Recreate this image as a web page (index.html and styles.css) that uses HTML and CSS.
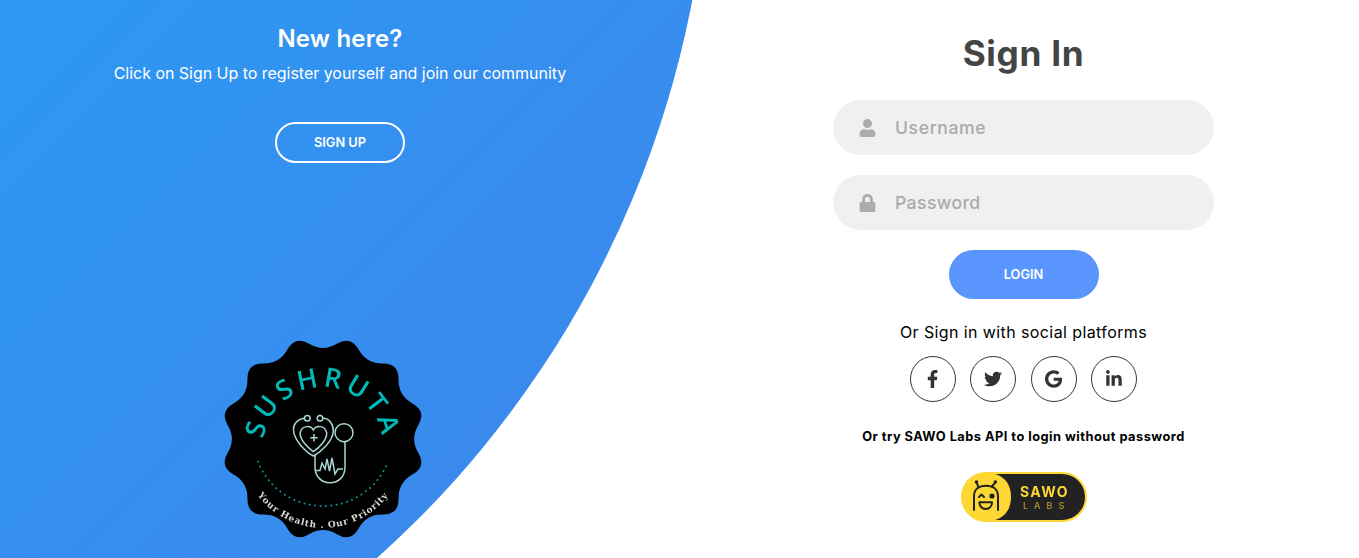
FILE: index.html
```html
<!DOCTYPE html>
<html lang="en">
<head>
<meta charset="utf-8">
<title>Sushruta Sign In</title>
<link rel="stylesheet" href="styles.css">
</head>
<body>
<div class="page">
  <div class="disc"></div>
  <section class="panel">
    <h3 class="panel-title">New here?</h3>
    <p class="panel-text">Click on Sign Up to register yourself and join our community</p>
    <button class="btn-outline" type="button">SIGN UP</button>
    <svg class="badge" viewBox="-100 -100 200 200" width="200" height="200" role="img" aria-label="Sushruta logo">
      <defs>
        <path id="arc-top" d="M-60 8A60 60 0 0 1 60 8"/>
        <path id="arc-bottom" d="M-72 46A82 82 0 0 0 72 46"/>
      </defs>
      <path class="badge-body" d="M-13.4-92.05Q0-84 13.4-92.05Q26.8-100.1 34.4-86.4Q42-72.7 57.65-73Q73.3-73.3 73-57.65Q72.7-42 86.4-34.4Q100.1-26.8 92.05-13.4Q84 0 92.05 13.4Q100.1 26.8 86.4 34.4Q72.7 42 73 57.65Q73.3 73.3 57.65 73Q42 72.7 34.4 86.4Q26.8 100.1 13.4 92.05Q0 84-13.4 92.05Q-26.8 100.1-34.4 86.4Q-42 72.7-57.65 73Q-73.3 73.3-73 57.65Q-72.7 42-86.4 34.4Q-100.1 26.8-92.05 13.4Q-84 0-92.05-13.4Q-100.1-26.8-86.4-34.4Q-72.7-42-73-57.65Q-73.3-73.3-57.65-73Q-42-72.7-34.4-86.4Q-26.8-100.1-13.4-92.05Z"/>
      <text class="badge-name"><textPath href="#arc-top" startOffset="50%" text-anchor="middle">SUSHRUTA</textPath></text>
      <path class="badge-dots" d="M-65 22.7A69.8 69.8 0 0 0 65 22.7"/>
      <text class="badge-motto"><textPath href="#arc-bottom" startOffset="50%" text-anchor="middle">Your Health . Our Priority</textPath></text>
      <g class="badge-scope">
        <circle cx="-15.7" cy="-20.7" r="2.8"/>
        <circle cx="-3" cy="-20.7" r="2.8"/>
        <path d="M-18.5-20.7C-26-20-30-14-29.5-9C-29 2-16 14-9.5 17C-2 13 10 2 10.3-8C10.5-15 6-21-.2-20.7"/>
        <path d="M-9.7-9C-12-14-21-14-23-6C-23 1-15 9-9.700 12.700C-4 9 4 1 3.700-6C2-14-7-14-9.700-9Z"/>
        <path d="M-9-5V2.500M-12.800-1.300H-5.200"/>
        <circle cx="21" cy="-6.300" r="9"/>
        <path d="M22 3V28C22 38 15 43.700 7 43.700C-1 43.700-8 38-8 28V16"/>
        <path d="M-7 31.500H-3L-1 24L2 30L4 20L6.500 32L9 19L12 35L15 30H20"/>
      </g>
    </svg>
  </section>
  <section class="form-side">
    <h2 class="form-title">Sign In</h2>
    <label class="field">
      <svg class="field-icon" viewBox="0 0 448 512"><path d="M224 256c70.7 0 128-57.3 128-128S294.7 0 224 0 96 57.3 96 128s57.3 128 128 128zm89.6 32h-16.7c-22.2 10.2-46.9 16-72.9 16s-50.6-5.8-72.9-16h-16.7C60.2 288 0 348.2 0 422.4V464c0 26.5 21.5 48 48 48h352c26.5 0 48-21.5 48-48v-41.6c0-74.2-60.2-134.4-134.4-134.4z"/></svg>
      <input class="field-input" type="text" placeholder="Username">
    </label>
    <label class="field">
      <svg class="field-icon" viewBox="0 0 448 512"><path d="M400 224h-24v-72C376 68.2 307.8 0 224 0S72 68.2 72 152v72H48c-26.5 0-48 21.5-48 48v192c0 26.5 21.5 48 48 48h352c26.5 0 48-21.5 48-48V272c0-26.5-21.5-48-48-48zm-104 0H152v-72c0-39.7 32.3-72 72-72s72 32.3 72 72v72z"/></svg>
      <input class="field-input field-input-pass" type="password" placeholder="Password">
    </label>
    <button class="btn-solid" type="button">LOGIN</button>
    <p class="social-text">Or Sign in with social platforms</p>
    <div class="social">
      <a class="social-link"><svg class="social-icon" viewBox="0 0 320 512"><path d="M279.14 288l14.22-92.66h-88.91v-60.13c0-25.35 12.42-50.06 52.24-50.06h40.42V6.26S260.43 0 225.36 0c-73.22 0-121.08 44.38-121.08 124.72v70.62H22.89V288h81.39v224h100.17V288z"/></svg></a>
      <a class="social-link"><svg class="social-icon" viewBox="0 0 512 512"><path d="M459.37 151.716c.325 4.548.325 9.097.325 13.645 0 138.72-105.583 298.558-298.558 298.558-59.452 0-114.68-17.219-161.137-47.106 8.447.974 16.568 1.299 25.34 1.299 49.055 0 94.213-16.568 130.274-44.832-46.132-.975-84.792-31.188-98.112-72.772 6.498.974 12.995 1.624 19.818 1.624 9.421 0 18.843-1.3 27.614-3.573-48.081-9.747-84.143-51.98-84.143-102.985v-1.299c13.969 7.797 30.214 12.67 47.431 13.319-28.264-18.843-46.781-51.005-46.781-87.391 0-19.492 5.197-37.36 14.294-52.954 51.655 63.675 129.3 105.258 216.365 109.807-1.624-7.797-2.599-15.918-2.599-24.04 0-57.828 46.782-104.934 104.934-104.934 30.213 0 57.502 12.67 76.67 33.137 23.715-4.548 46.456-13.32 66.599-25.34-7.798 24.366-24.366 44.833-46.132 57.827 21.117-2.273 41.584-8.122 60.426-16.243-14.292 20.791-32.161 39.308-52.628 54.253z"/></svg></a>
      <a class="social-link"><svg class="social-icon" viewBox="0 0 488 512"><path d="M488 261.8C488 403.3 391.1 504 248 504 110.8 504 0 393.2 0 256S110.8 8 248 8c66.8 0 123 24.5 166.3 64.9l-67.5 64.9C258.5 52.6 94.3 116.6 94.3 256c0 86.5 69.1 156.6 153.7 156.6 98.2 0 135-70.4 140.8-106.9H248v-85.3h236.1c2.3 12.7 3.9 24.9 3.9 41.4z"/></svg></a>
      <a class="social-link"><svg class="social-icon" viewBox="0 0 448 512"><path d="M100.28 448H7.4V148.9h92.88zM53.79 108.1C24.09 108.1 0 83.5 0 53.8a53.79 53.79 0 0 1 107.58 0c0 29.7-24.1 54.3-53.79 54.3zM447.9 448h-92.68V302.4c0-34.7-.7-79.2-48.29-79.2-48.29 0-55.69 37.7-55.69 76.7V448h-92.78V148.9h89.08v40.8h1.3c12.4-23.5 42.69-48.3 87.88-48.3 94 0 111.28 61.9 111.28 142.3V448z"/></svg></a>
    </div>
    <p class="api-text">Or try SAWO Labs API to login without password</p>
    <svg class="sawo" viewBox="0 0 126 50" width="126" height="50" role="img" aria-label="SAWO Labs">
      <rect class="sawo-pill" x="1" y="1" width="124" height="48" rx="24"/>
      <path class="sawo-face" d="M25 1C11.700 1 1 11.700 1 25s10.700 24 24 24c4 0 8-.5 12-2 9-4 13-12 13-22S46 7 37 3C33 1.500 29 1 25 1Z"/>
      <g class="sawo-line">
        <path d="M13 38V24C13 17 18 13.700 25 13.700S37 17 37 24V38"/>
        <path d="M17.300 14.700L15.700 11M30.700 14.700L34 11"/>
        <path d="M18 25L20.500 22.500L23 25"/>
        <path d="M18.300 30.300H31C31 34 28.500 37 24.700 37S18.300 34 18.300 30.300Z"/>
      </g>
      <circle class="sawo-dot" cx="15.500" cy="10" r="1.800"/>
      <circle class="sawo-dot" cx="34.300" cy="10" r="1.800"/>
      <circle class="sawo-dot" cx="31" cy="24" r="2.600"/>
      <text class="sawo-name" x="59" y="25">SAWO</text>
      <text class="sawo-labs" x="62" y="37">LABS</text>
    </svg>
  </section>
</div>
</body>
</html>
```
FILE: styles.css
```css
* { box-sizing: border-box; margin: 0; padding: 0; }
html, body { height: 100%; }
body { font-family: "Inter", "Noto Sans", sans-serif; background: #fff; overflow: hidden; }

.page {
  position: relative;
  height: 558px;
  overflow: hidden;
  display: grid;
  grid-template-columns: 688px 1fr;
  background: #fff;
}
.disc {
  position: absolute;
  left: -1290px;
  top: -1187px;
  width: 2000px;
  height: 2000px;
  border-radius: 50%;
  background: linear-gradient(-45deg, #4481eb 0%, #04befe 100%);
}

.panel {
  position: relative;
  padding: 22px 8px 0 0;
  display: flex;
  flex-direction: column;
  align-items: center;
  color: #fff;
}
.panel-title { font-size: 24px; font-weight: 600; line-height: 33px; letter-spacing: .2px; }
.panel-text { font-size: 16px; line-height: 24px; padding: 6px 0 37px; letter-spacing: -.03px; }
.btn-outline {
  width: 130px;
  height: 41px;
  border: 2px solid #fff;
  border-radius: 49px;
  background: none;
  color: #fff;
  font: 600 12.800px "Inter", sans-serif;
}
.badge { margin-top: 176px; display: block; overflow: visible; transform: translateX(-17px); filter: blur(.35px); }
.badge-body { fill: #000; transform: scale(1.035); }
.badge-name { font: 600 27px "Open Sans", sans-serif; fill: #00b9b9; letter-spacing: 4px; }
.badge-dots { fill: none; stroke: #0a9c9c; stroke-width: 2; stroke-linecap: round; stroke-dasharray: 0 5.400; }
.badge-motto { font: 700 9px "DejaVu Serif", serif; fill: #d9d9d9; letter-spacing: .8px; }
.badge-scope { fill: none; stroke: #a8d6d2; stroke-width: 1.500; }

.form-side {
  position: relative;
  display: flex;
  flex-direction: column;
  align-items: center;
  padding-top: 29px;
}
.form-title { font-size: 35.200px; font-weight: 700; line-height: 48px; color: #444; margin-bottom: 23px; letter-spacing: .7px; }
.field {
  width: 381px;
  height: 55px;
  flex: none;
  margin-bottom: 20px;
  border-radius: 55px;
  background: #f0f0f0;
  display: flex;
  align-items: center;
  padding-left: 26px;
}
.field-icon { width: 17px; height: 18px; fill: #acacac; flex: none; }
.field-input {
  flex: 1;
  min-width: 0;
  margin-left: 19px;
  border: 0;
  outline: 0;
  background: none;
  font: 500 17.600px "Inter", sans-serif;
  letter-spacing: .6px;
  color: #333;
}
.field-input-pass { letter-spacing: .4px; }
.field-input::placeholder { color: #aaa; opacity: 1; }
.btn-solid {
  width: 150px;
  height: 49px;
  flex: none;
  border: 0;
  border-radius: 49px;
  background: #5995fd;
  color: #fff;
  font: 600 12.800px "Inter", sans-serif;
}
.social-text { font-size: 16px; line-height: 24px; color: #000; margin-top: 21px; letter-spacing: .4px; }
.social { display: flex; gap: 14.400px; margin-top: 12px; }
.social-link {
  width: 46px;
  height: 46px;
  border: 1px solid #333;
  border-radius: 50%;
  display: flex;
  align-items: center;
  justify-content: center;
}
.social-icon { height: 18px; fill: #333; }
.api-text { font-size: 12.800px; font-weight: 700; line-height: 20px; color: #000; margin-top: 25px; letter-spacing: .48px; }
.sawo { margin-top: 25px; display: block; filter: blur(.25px); }
.sawo-pill { fill: #222; stroke: #fdd835; stroke-width: 2; }
.sawo-face { fill: #fdd835; }
.sawo-line { fill: none; stroke: #222; stroke-width: 2; stroke-linecap: round; stroke-linejoin: round; }
.sawo-dot { fill: #222; }
.sawo-name { font: 700 14px "Inter", sans-serif; fill: #fdd835; letter-spacing: 1.400px; }
.sawo-labs { font: 500 9px "Inter", sans-serif; fill: #b59b2c; letter-spacing: 6px; }
```
